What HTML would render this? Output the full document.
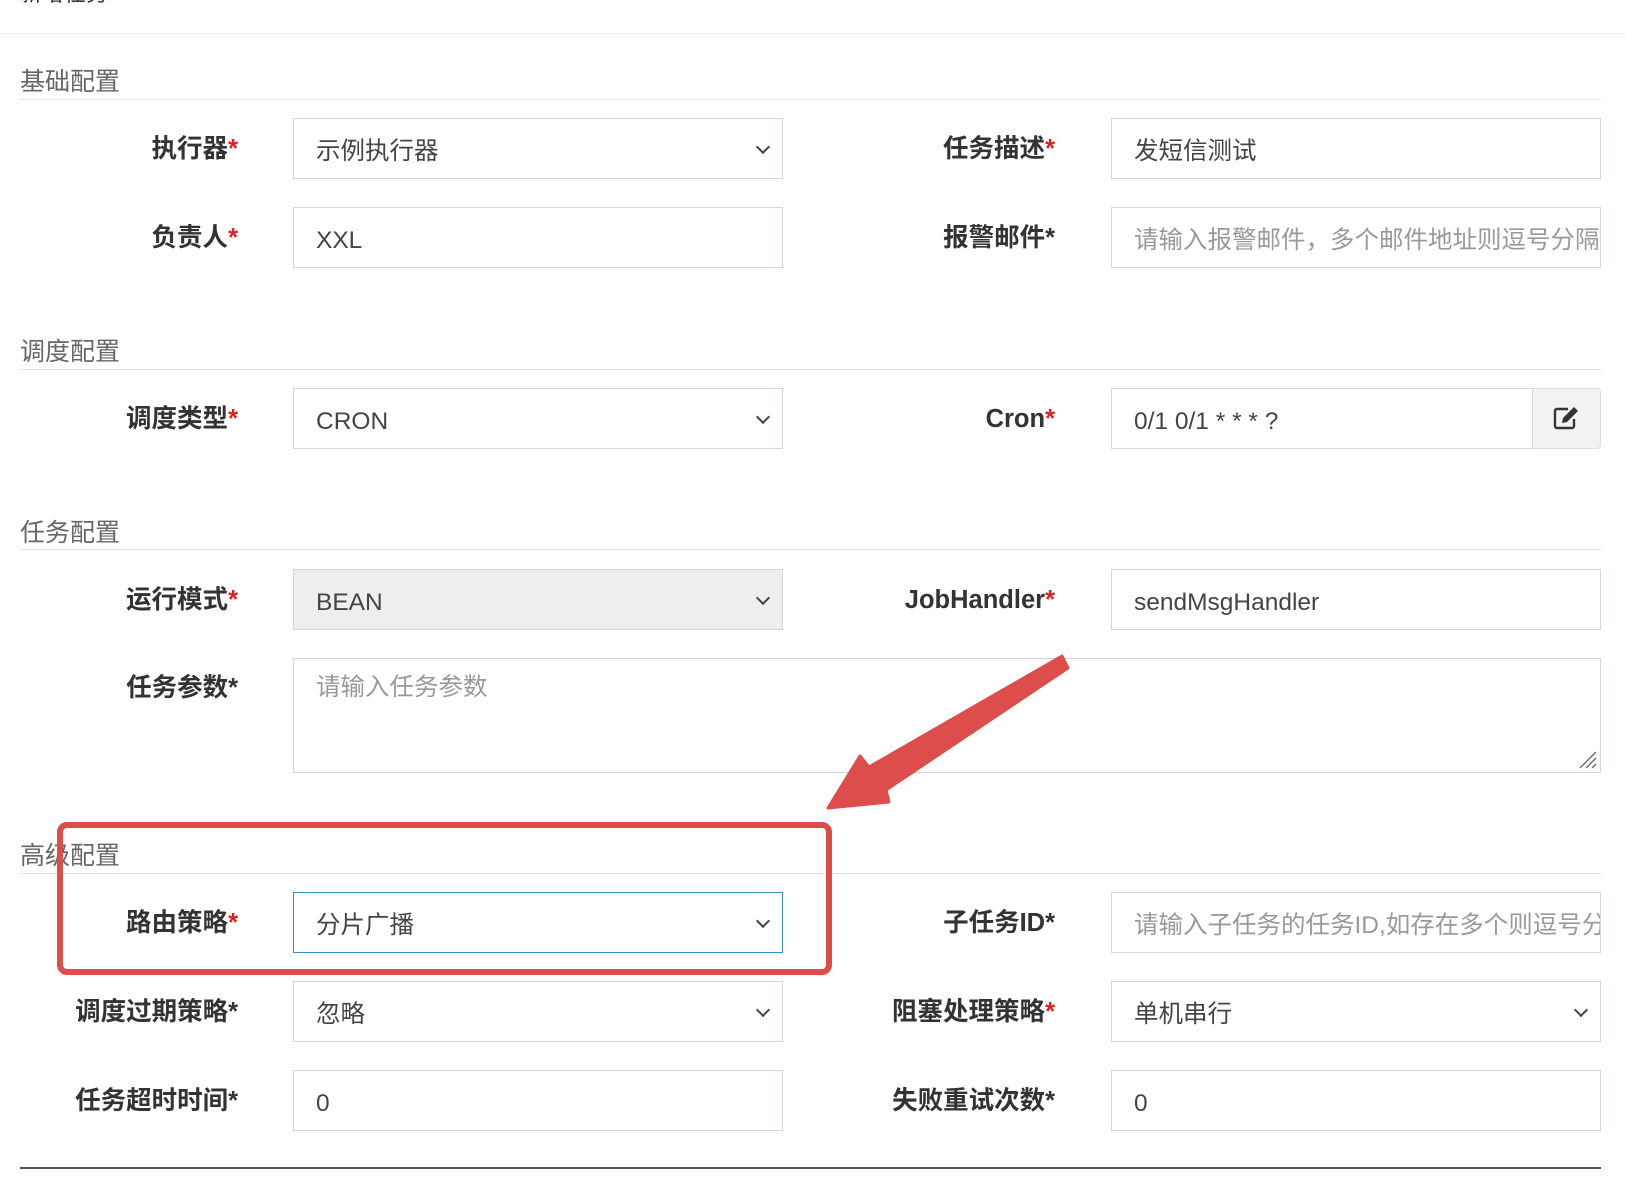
<!DOCTYPE html>
<html><head><meta charset="utf-8"><style>
*{box-sizing:border-box;margin:0;padding:0}
body{width:1625px;height:1189px;background:#fff;position:relative;overflow:hidden;font-family:"Liberation Sans","Noto Sans CJK SC",sans-serif;color:#333}
.a{position:absolute}
.sec{position:absolute;left:20px;font-size:25px;color:#666;line-height:30px}
.ln{position:absolute;left:20px;width:1581px;height:1px;background:#e2e2e2}
.lbl{position:absolute;width:220px;text-align:right;font-weight:bold;font-size:25.5px;color:#333;line-height:30px;white-space:nowrap}
.lbl i{font-style:normal;color:#e02020}
.in{position:absolute;height:61px;border:1px solid #d2d6de;background:#fff;font-size:24.5px;color:#444;padding-left:22px;padding-right:22px;padding-top:3px;line-height:59px;white-space:nowrap;overflow:hidden}
.ph{color:#999}
.sel:after{content:"";position:absolute;right:14px;top:23px;width:8px;height:8px;border-right:2px solid #444;border-bottom:2px solid #444;transform:rotate(45deg)}
</style></head><body>
<div class="a" style="left:0;top:33px;width:1625px;height:1px;background:#eee"></div>
<div class="a" style="left:20px;top:-24px;font-size:22px;color:#333">新增任务</div>

<div class="sec" style="top:67px">基础配置</div><div class="ln" style="top:99px"></div>
<div class="lbl" style="left:18px;top:134px">执行器<i>*</i></div>
<div class="in sel" style="left:293px;top:118px;width:490px">示例执行器</div>
<div class="lbl" style="left:835px;top:134px">任务描述<i>*</i></div>
<div class="in" style="left:1111px;top:118px;width:490px">发短信测试</div>
<div class="lbl" style="left:18px;top:223px">负责人<i>*</i></div>
<div class="in" style="left:293px;top:207px;width:490px">XXL</div>
<div class="lbl" style="left:835px;top:223px">报警邮件*</div>
<div class="in ph" style="left:1111px;top:207px;width:490px">请输入报警邮件，多个邮件地址则逗号分隔</div>

<div class="sec" style="top:337px">调度配置</div><div class="ln" style="top:369px"></div>
<div class="lbl" style="left:18px;top:404px">调度类型<i>*</i></div>
<div class="in sel" style="left:293px;top:388px;width:490px">CRON</div>
<div class="lbl" style="left:835px;top:404px">Cron<i>*</i></div>
<div class="in" style="left:1111px;top:388px;width:422px">0/1 0/1 * * * ?</div>
<div class="a" style="left:1532px;top:388px;width:69px;height:61px;background:#f2f2f2;border:1px solid #ddd;border-radius:0 4px 4px 0"></div>
<svg class="a" style="left:1552px;top:405px" width="28" height="26" viewBox="0 0 28 26"><path d="M16 4H5a2 2 0 0 0-2 2v15a2 2 0 0 0 2 2h15a2 2 0 0 0 2-2v-7" fill="none" stroke="#333" stroke-width="2.4"/><path d="M22 2l4 4-11 11-5 1 1-5z" fill="#333"/></svg>

<div class="sec" style="top:518px">任务配置</div><div class="ln" style="top:549px"></div>
<div class="lbl" style="left:18px;top:585px">运行模式<i>*</i></div>
<div class="in sel" style="left:293px;top:569px;width:490px;background:#eee">BEAN</div>
<div class="lbl" style="left:835px;top:585px">JobHandler<i>*</i></div>
<div class="in" style="left:1111px;top:569px;width:490px">sendMsgHandler</div>
<div class="lbl" style="left:18px;top:673px">任务参数*</div>
<div class="in ph" style="left:293px;top:658px;width:1308px;height:115px;line-height:52px">请输入任务参数</div>
<svg class="a" style="left:1578px;top:750px" width="20" height="20"><path d="M2 18L18 2M8 18L18 8M14 18L18 14" stroke="#666" stroke-width="1.3"/></svg>

<div class="sec" style="top:841px">高级配置</div><div class="ln" style="top:873px"></div>
<div class="lbl" style="left:18px;top:908px">路由策略<i>*</i></div>
<div class="in sel" style="left:293px;top:892px;width:490px;border-color:#3c8dbc">分片广播</div>
<div class="lbl" style="left:835px;top:908px">子任务ID*</div>
<div class="in ph" style="left:1111px;top:892px;width:490px">请输入子任务的任务ID,如存在多个则逗号分隔</div>
<div class="lbl" style="left:18px;top:997px">调度过期策略*</div>
<div class="in sel" style="left:293px;top:981px;width:490px">忽略</div>
<div class="lbl" style="left:835px;top:997px">阻塞处理策略<i>*</i></div>
<div class="in sel" style="left:1111px;top:981px;width:490px">单机串行</div>
<div class="lbl" style="left:18px;top:1086px">任务超时时间*</div>
<div class="in" style="left:293px;top:1070px;width:490px">0</div>
<div class="lbl" style="left:835px;top:1086px">失败重试次数*</div>
<div class="in" style="left:1111px;top:1070px;width:490px">0</div>
<div class="a" style="left:20px;top:1167px;width:1581px;height:2px;background:#555"></div>

<div class="a" style="left:57px;top:822px;width:775px;height:153px;border:6px solid #dc4d4b;border-radius:10px"></div>
<svg class="a" style="left:0;top:0" width="1625" height="1189"><polygon points="1062,656 1068,668 886,790 889,802 828,808 860,756 869,767" fill="#dc4d4b" stroke="#dc4d4b" stroke-width="3" stroke-linejoin="round"/></svg>
</body></html>
